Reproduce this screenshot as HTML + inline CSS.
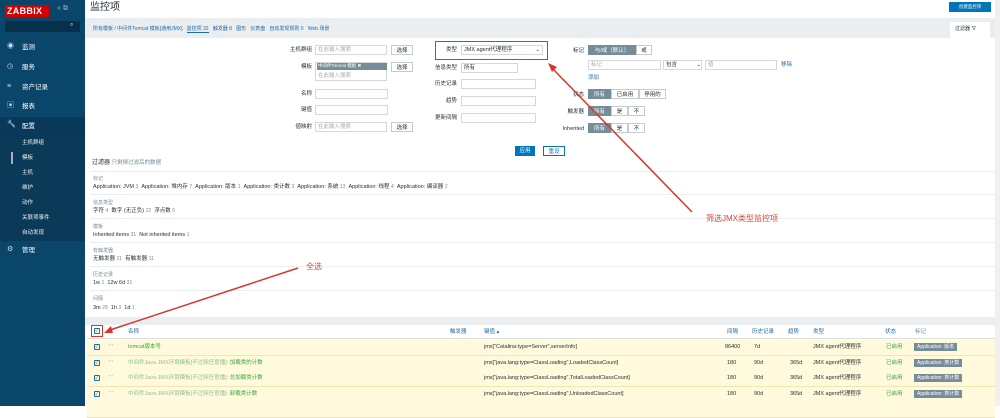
<!DOCTYPE html><html><head><meta charset="utf-8"><style>
*{margin:0;padding:0;box-sizing:border-box}
body{width:1000px;height:406px;overflow:hidden;background:#fff;font-family:"Liberation Sans","Noto Sans CJK SC",sans-serif;font-size:5.5px;line-height:1.2;color:#1f2c33;position:relative}
.a{position:absolute;white-space:nowrap}
#sb{left:0;top:0;width:85px;height:406px;background:#0a466a}
.mi{left:0;width:85px;height:20px;color:#fff;font-size:6.5px;padding:6px 0 0 22px}
.inp{background:#fff;border:1px solid #d3d8dc;height:10px;padding-top:1px}
.btn{background:#fff;border:1px solid #c5cbcf;height:10px;text-align:center;font-size:5.5px;padding-top:1.5px}
.lbl{text-align:right;font-size:5.5px}
.seg{height:10px;border:1px solid #c5cbcf;text-align:center;font-size:5.5px;padding-top:1.5px;background:#fff}
.on{background:#768d99;color:#fff;border-color:#768d99}
.gl{color:#768d99;font-size:5px}
.ln{font-size:5.5px}
.row{left:87px;width:908px;height:15.5px;background:#fffadc;border-bottom:1px solid #efe6b7}
.tag{background:#768d99;color:#fff;padding:1px 3px;font-size:5px}
.grn{color:#3aa543}
.lk{color:#1f6aa5}
.cb{width:6px;height:6px;border:1px solid #1f6aa5;border-radius:1px;font-size:5px;line-height:4px;text-align:center;color:#1f6aa5}
</style></head><body>
<div id="sb" class="a"></div>
<div class="a" style="left:5px;top:5px;width:44px;height:12px;background:#d40000;color:#fff;font-weight:bold;font-size:9px;padding:1px 2px;letter-spacing:.3px">ZABBIX</div>
<div class="a" style="left:57px;top:5px;color:#9cb4c5;font-size:7px">« ⧉</div>
<div class="a" style="left:5px;top:21px;width:75px;height:11px;background:#07304a"></div>
<div class="a" style="left:70px;top:22px;color:#cde;font-size:6px">⌕</div>
<div class="a mi" style="top:38px">监测</div><div class="a" style="left:7px;top:43px;color:#cde;font-size:7px">◉</div>
<div class="a mi" style="top:58px">服务</div><div class="a" style="left:7px;top:63px;color:#cde;font-size:7px">◷</div>
<div class="a mi" style="top:78px">资产记录</div><div class="a" style="left:7px;top:83px;color:#cde;font-size:7px">≡</div>
<div class="a mi" style="top:97px">报表</div><div class="a" style="left:7px;top:102px;color:#cde;font-size:7px">▣</div>
<div class="a mi" style="top:117px;background:#08385a">配置</div><div class="a" style="left:7px;top:121px;color:#fff;font-size:7px">🔧</div>
<div class="a" style="left:0;top:137px;width:85px;height:104px;background:#0a3a58"></div>
<div class="a" style="left:22px;top:140px;color:#e8eef2">主机群组</div>
<div class="a" style="left:11px;top:152px;width:2px;height:12px;background:#aac"></div>
<div class="a" style="left:22px;top:155px;color:#e8eef2">模板</div>
<div class="a" style="left:22px;top:170px;color:#e8eef2">主机</div>
<div class="a" style="left:22px;top:185px;color:#e8eef2">维护</div>
<div class="a" style="left:22px;top:200px;color:#e8eef2">动作</div>
<div class="a" style="left:22px;top:215px;color:#e8eef2">关联项事件</div>
<div class="a" style="left:22px;top:230px;color:#e8eef2">自动发现</div>
<div class="a mi" style="top:241px">管理</div><div class="a" style="left:7px;top:246px;color:#cde;font-size:7px">⚙</div>

<div class="a" style="left:90px;top:2px;font-size:10px">监控项</div>
<div class="a" style="left:949px;top:2px;width:42px;height:10px;background:#0275b8;color:#fff;font-size:4.5px;text-align:center;padding-top:2px">创建监控项</div>
<div class="a" style="left:85px;top:18px;width:910px;height:20px;background:#ebeef0"></div>
<div class="a lk" style="left:93px;top:26px;font-size:5px">所有模板 / 中间件Tomcat 模板[通用JMX] &nbsp; <span style="border-bottom:1px solid #1f6aa5">监控项 32</span> &nbsp; 触发器 8 &nbsp; 图形 &nbsp; 仪表盘 &nbsp; 自动发现规则 0 &nbsp; Web 场景</div>
<div class="a" style="left:950px;top:22px;width:40px;height:16px;background:#fff;padding:4px 0 0 5px;font-size:5px">过滤器 ∇</div>
<div class="a" style="left:995px;top:0;width:5px;height:406px;background:#f0f0f0"></div>

<div class="a lbl" style="left:280px;top:47px;width:32px">主机群组</div><div class="a inp" style="left:315px;top:45px;width:72px;color:#aaa;padding-left:2px">在此输入搜索</div><div class="a btn" style="left:391px;top:45px;width:22px">选择</div>
<div class="a lbl" style="left:280px;top:64px;width:32px">模板</div><div class="a inp" style="left:315px;top:62px;width:72px;height:19px"></div><div class="a" style="left:317px;top:63px;width:70px;height:7px;background:#768d99;color:#fff;font-size:4.5px;padding-left:1px">中间件Tomcat 模板 ✖</div><div class="a" style="left:318px;top:73px;color:#aaa">在此输入搜索</div><div class="a btn" style="left:391px;top:62px;width:22px">选择</div>
<div class="a lbl" style="left:280px;top:91px;width:32px">名称</div><div class="a inp" style="left:315px;top:89px;width:73px"></div>
<div class="a lbl" style="left:280px;top:107px;width:32px">键值</div><div class="a inp" style="left:315px;top:105px;width:73px"></div>
<div class="a lbl" style="left:280px;top:124px;width:32px">値映射</div><div class="a inp" style="left:315px;top:122px;width:72px;color:#aaa;padding-left:2px">在此输入搜索</div><div class="a btn" style="left:391px;top:122px;width:22px">选择</div>

<div class="a" style="left:435px;top:41px;width:113px;height:19px;border:1.5px solid #d9352a"></div>
<div class="a lbl" style="left:430px;top:47px;width:27px">类型</div><div class="a inp" style="left:461px;top:45px;width:82px;padding-left:2px">JMX agent代理程序 <span style="float:right;padding-right:2px">⌄</span></div>
<div class="a lbl" style="left:425px;top:65px;width:32px">信息类型</div><div class="a inp" style="left:461px;top:63px;width:57px;padding-left:2px">所有</div>
<div class="a lbl" style="left:425px;top:81px;width:32px">历史记录</div><div class="a inp" style="left:461px;top:79px;width:75px"></div>
<div class="a lbl" style="left:425px;top:98px;width:32px">趋势</div><div class="a inp" style="left:461px;top:96px;width:75px"></div>
<div class="a lbl" style="left:425px;top:115px;width:32px">更新间隔</div><div class="a inp" style="left:461px;top:113px;width:75px"></div>

<div class="a lbl" style="left:560px;top:48px;width:24px">标记</div>
<div class="a seg on" style="left:588px;top:45px;width:48px">与/或（默认）</div><div class="a seg" style="left:636px;top:45px;width:16px">或</div>
<div class="a inp" style="left:588px;top:60px;width:73px;color:#aaa;padding-left:2px">标记</div>
<div class="a inp" style="left:663px;top:60px;width:39px;padding-left:2px">包含 <span style="float:right">⌄</span></div>
<div class="a inp" style="left:705px;top:60px;width:72px;color:#aaa;padding-left:2px">値</div>
<div class="a lk" style="left:781px;top:62px">移除</div>
<div class="a lk" style="left:588px;top:75px">添加</div>
<div class="a lbl" style="left:560px;top:92px;width:24px">状态</div>
<div class="a seg on" style="left:588px;top:89px;width:23px">所有</div><div class="a seg" style="left:611px;top:89px;width:28px">已启用</div><div class="a seg" style="left:639px;top:89px;width:27px">停用的</div>
<div class="a lbl" style="left:540px;top:109px;width:44px">触发器</div>
<div class="a seg on" style="left:588px;top:106px;width:23px">所有</div><div class="a seg" style="left:611px;top:106px;width:17px">是</div><div class="a seg" style="left:628px;top:106px;width:17px">不</div>
<div class="a lbl" style="left:530px;top:126px;width:54px">Inherited</div>
<div class="a seg on" style="left:588px;top:123px;width:23px">所有</div><div class="a seg" style="left:611px;top:123px;width:17px">是</div><div class="a seg" style="left:628px;top:123px;width:17px">不</div>

<div class="a" style="left:515px;top:146px;width:20px;height:10px;background:#0275b8;color:#fff;text-align:center;padding-top:1.5px">应用</div>
<div class="a btn" style="left:543px;top:146px;width:22px;border-color:#0275b8;color:#0275b8">重设</div>

<div class="a" style="left:92px;top:160px;font-size:6px">过滤器 <span class="gl" style="font-size:5.5px">只剩候过滤后的数据</span></div>
<div class="a" style="left:90px;top:171px;width:905px;border-top:1px solid #eceff1"></div>
<div class="a gl" style="left:93px;top:176px">标记</div>
<div class="a ln" style="left:93px;top:184px">Application: JVM <span class="gl">3</span> &nbsp;Application: 堆内存 <span class="gl">7</span> &nbsp;Application: 版本 <span class="gl">1</span> &nbsp;Application: 类计数 <span class="gl">3</span> &nbsp;Application: 系统 <span class="gl">13</span> &nbsp;Application: 线程 <span class="gl">4</span> &nbsp;Application: 编译器 <span class="gl">2</span></div>
<div class="a" style="left:90px;top:194px;width:905px;border-top:1px solid #eceff1"></div>
<div class="a gl" style="left:93px;top:200px">信息类型</div>
<div class="a ln" style="left:93px;top:208px">字符 <span class="gl">4</span> &nbsp;数字 (无正负) <span class="gl">22</span> &nbsp;浮点数 <span class="gl">6</span></div>
<div class="a" style="left:90px;top:218px;width:905px;border-top:1px solid #eceff1"></div>
<div class="a gl" style="left:93px;top:224px">模板</div>
<div class="a ln" style="left:93px;top:232px">Inherited items <span class="gl">31</span> &nbsp;Not inherited items <span class="gl">1</span></div>
<div class="a" style="left:90px;top:242px;width:905px;border-top:1px solid #eceff1"></div>
<div class="a gl" style="left:93px;top:248px">有触发器</div>
<div class="a ln" style="left:93px;top:256px">无触发器 <span class="gl">21</span> &nbsp;有触发器 <span class="gl">11</span></div>
<div class="a" style="left:90px;top:266px;width:905px;border-top:1px solid #eceff1"></div>
<div class="a gl" style="left:93px;top:272px">历史记录</div>
<div class="a ln" style="left:93px;top:280px">1w <span class="gl">1</span> &nbsp;12w 6d <span class="gl">31</span></div>
<div class="a" style="left:90px;top:290px;width:905px;border-top:1px solid #eceff1"></div>
<div class="a gl" style="left:93px;top:296px">间隔</div>
<div class="a ln" style="left:93px;top:305px">3m <span class="gl">28</span> &nbsp;1h <span class="gl">3</span> &nbsp;1d <span class="gl">1</span></div>
<div class="a" style="left:85px;top:317px;width:910px;height:8px;background:#ebeef0"></div>

<div class="a" style="left:87px;top:325px;width:908px;height:14px;border-bottom:1px solid #d9dee1"></div>
<div class="a" style="left:91px;top:325px;width:12px;height:12px;border:1.5px solid #d9352a"></div>
<div class="a cb" style="left:94px;top:328px">✓</div>
<div class="a lk" style="left:128px;top:329px">名称</div>
<div class="a lk" style="left:450px;top:329px">触发器</div>
<div class="a lk" style="left:484px;top:329px">键值 ▴</div>
<div class="a lk" style="left:727px;top:329px">间隔</div>
<div class="a lk" style="left:752px;top:329px">历史记录</div>
<div class="a lk" style="left:788px;top:329px">趋势</div>
<div class="a lk" style="left:813px;top:329px">类型</div>
<div class="a lk" style="left:885px;top:329px">状态</div>
<div class="a" style="left:915px;top:329px;color:#768d99">标记</div>

<div class="a row" style="top:340px"></div>
<div class="a row" style="top:356px"></div>
<div class="a row" style="top:371px"></div>
<div class="a row" style="top:387px"></div>
<div class="a row" style="top:402px"></div>

<div class="a cb" style="left:94px;top:344px">✓</div><div class="a" style="left:108px;top:343px;color:#666">⋯</div>
<div class="a grn" style="left:128px;top:344px">tomcat版本号</div>
<div class="a" style="left:484px;top:344px">jmx["Catalina:type=Server",serverInfo]</div>
<div class="a" style="left:725px;top:344px">86400</div><div class="a" style="left:754px;top:344px">7d</div>
<div class="a" style="left:813px;top:344px">JMX agent代理程序</div><div class="a grn" style="left:886px;top:344px">已启用</div><div class="a tag" style="left:914px;top:343px">Application: 版本</div>

<div class="a cb" style="left:94px;top:360px">✓</div><div class="a" style="left:108px;top:359px;color:#666">⋯</div>
<div class="a" style="left:128px;top:360px"><span style="color:#8fbf95">中间件Java JMX环境模板[不过除任意播]:</span> <span class="grn">加载类的计数</span></div>
<div class="a" style="left:484px;top:360px">jmx["java.lang:type=ClassLoading",LoadedClassCount]</div>
<div class="a" style="left:727px;top:360px">180</div><div class="a" style="left:754px;top:360px">90d</div><div class="a" style="left:790px;top:360px">365d</div>
<div class="a" style="left:813px;top:360px">JMX agent代理程序</div><div class="a grn" style="left:886px;top:360px">已启用</div><div class="a tag" style="left:914px;top:359px">Application: 类计数</div>

<div class="a cb" style="left:94px;top:375px">✓</div><div class="a" style="left:108px;top:374px;color:#666">⋯</div>
<div class="a" style="left:128px;top:375px"><span style="color:#8fbf95">中间件Java JMX环境模板[不过除任意播]:</span> <span class="grn">总加载类计数</span></div>
<div class="a" style="left:484px;top:375px">jmx["java.lang:type=ClassLoading",TotalLoadedClassCount]</div>
<div class="a" style="left:727px;top:375px">180</div><div class="a" style="left:754px;top:375px">90d</div><div class="a" style="left:790px;top:375px">365d</div>
<div class="a" style="left:813px;top:375px">JMX agent代理程序</div><div class="a grn" style="left:886px;top:375px">已启用</div><div class="a tag" style="left:914px;top:374px">Application: 类计数</div>

<div class="a cb" style="left:94px;top:391px">✓</div><div class="a" style="left:108px;top:390px;color:#666">⋯</div>
<div class="a" style="left:128px;top:391px"><span style="color:#8fbf95">中间件Java JMX环境模板[不过除任意播]:</span> <span class="grn">卸载类计数</span></div>
<div class="a" style="left:484px;top:391px">jmx["java.lang:type=ClassLoading",UnloadedClassCount]</div>
<div class="a" style="left:727px;top:391px">180</div><div class="a" style="left:754px;top:391px">90d</div><div class="a" style="left:790px;top:391px">365d</div>
<div class="a" style="left:813px;top:391px">JMX agent代理程序</div><div class="a grn" style="left:886px;top:391px">已启用</div><div class="a tag" style="left:914px;top:390px">Application: 类计数</div>

<svg class="a" style="left:0;top:0" width="1000" height="406">
<line x1="692" y1="212" x2="552" y2="68" stroke="#d9352a" stroke-width="1.5"/>
<polygon points="548,63 557,67 552,72" fill="#d9352a"/>
<line x1="298" y1="268" x2="110" y2="330" stroke="#d9352a" stroke-width="1.5"/>
<polygon points="104,333 111,326 113,333" fill="#d9352a"/>
</svg>
<div class="a" style="left:706px;top:214px;color:#e0443a;font-size:8px">筛选JMX类型监控项</div>
<div class="a" style="left:306px;top:262px;color:#e0443a;font-size:8px">全选</div>
</body></html>
